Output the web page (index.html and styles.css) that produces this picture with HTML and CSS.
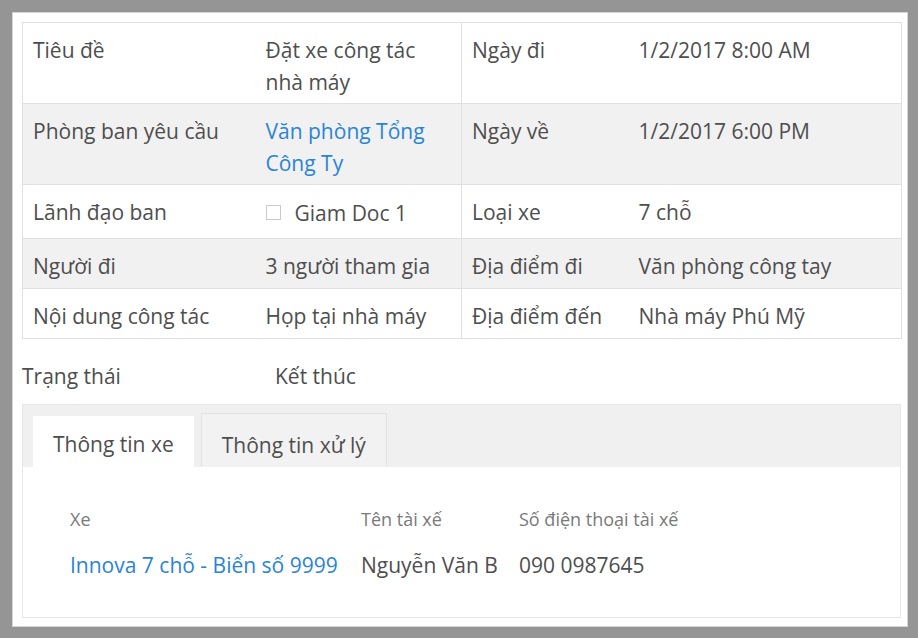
FILE: index.html
```html
<!DOCTYPE html>
<html lang="vi">
<head>
<meta charset="utf-8">
<title>Đặt xe công tác</title>
<link rel="stylesheet" href="styles.css">
</head>
<body>
<div class="panel">
  <table class="details">
    <colgroup>
      <col class="c1"><col class="c2"><col class="c3"><col class="c4">
    </colgroup>
    <tr>
      <td>Tiêu đề</td>
      <td>Đặt xe công tác nhà máy</td>
      <td class="sep">Ngày đi</td>
      <td>1/2/2017 8:00 AM</td>
    </tr>
    <tr class="alt">
      <td>Phòng ban yêu cầu</td>
      <td><a class="link" href="#">Văn phòng Tổng Công Ty</a></td>
      <td class="sep">Ngày về</td>
      <td>1/2/2017 6:00 PM</td>
    </tr>
    <tr class="tall">
      <td>Lãnh đạo ban</td>
      <td><span class="person"><span class="box"></span>Giam Doc 1</span></td>
      <td class="sep">Loại xe</td>
      <td>7 chỗ</td>
    </tr>
    <tr class="alt single">
      <td>Người đi</td>
      <td>3 người tham gia</td>
      <td class="sep">Địa điểm đi</td>
      <td>Văn phòng công tay</td>
    </tr>
    <tr class="single">
      <td>Nội dung công tác</td>
      <td>Họp tại nhà máy</td>
      <td class="sep">Địa điểm đến</td>
      <td>Nhà máy Phú Mỹ</td>
    </tr>
  </table>

  <div class="status">
    <span class="status-label">Trạng thái</span>
    <span class="status-value">Kết thúc</span>
  </div>

  <div class="tabs">
    <div class="tab-bar">
      <div class="tab active">Thông tin xe</div>
      <div class="tab">Thông tin xử lý</div>
    </div>
    <div class="tab-body">
      <div class="grid">
        <div class="th">Xe</div>
        <div class="th">Tên tài xế</div>
        <div class="th">Số điện thoại tài xế</div>
        <div class="td"><a class="link" href="#">Innova 7 chỗ - Biển số 9999</a></div>
        <div class="td">Nguyễn Văn B</div>
        <div class="td">090 0987645</div>
      </div>
    </div>
  </div>
</div>
</body>
</html>
```
FILE: styles.css
```css
html, body {
  margin: 0;
  padding: 0;
}
body {
  background: #959595;
  font-family: "Open Sans", "Noto Sans", sans-serif;
  font-size: 21px;
  color: #4e4e4e;
  padding: 12px 10px 11px 12px;
  height: 638px;
  box-sizing: border-box;
}
.panel {
  background: #fff;
  border: 1px solid #d4d4d4;
  height: 615px;
  box-sizing: border-box;
  padding: 9px 6px 0 9px;
}
.details {
  width: 879px;
  border-collapse: collapse;
  table-layout: fixed;
  border: 1px solid #e0e0e0;
}
.c1 { width: 233px; }
.c2 { width: 206px; }
.c3 { width: 167px; }
.c4 { width: 273px; }
.details td {
  padding: 11px 10px 5px 10px;
  line-height: 32px;
  vertical-align: top;
  border-top: 1px solid #e0e0e0;
}
.details td.sep {
  border-left: 1px solid #e0e0e0;
}
.details tr.alt td {
  background: #f1f1f1;
}
.details tr.tall td {
  padding-bottom: 9px;
}
.details tr.single td {
  padding-bottom: 6px;
}
.link {
  color: #2a84d6;
  text-decoration: none;
}
.person {
  display: inline-flex;
  align-items: center;
}
.box {
  width: 13px;
  height: 13px;
  border: 1px solid #cacaca;
  margin-right: 14px;
  background: #fff;
}
.status {
  display: flex;
  margin-top: 22px;
  line-height: 30px;
}
.status-label {
  width: 253px;
}
.tabs {
  margin-top: 13px;
  width: 879px;
  border: 1px solid #e6e6e6;
  box-sizing: border-box;
}
.tab-bar {
  background: #f0f0f0;
  height: 62px;
  display: flex;
  align-items: flex-end;
  gap: 6px;
  padding-left: 9px;
}
.tab {
  padding: 15px 20px 0;
  line-height: 32px;
  background: #f2f2f2;
  border: 1px solid #e2e2e2;
  border-bottom: none;
  box-sizing: border-box;
  height: 54px;
}
.tab.active {
  background: #fff;
  border-color: #f0f0f0;
  height: 52px;
  padding-top: 12px;
}
.tab-body {
  height: 150px;
  box-sizing: border-box;
  padding: 39px 0 0 47px;
}
.grid {
  display: grid;
  grid-template-columns: 291px 158px auto;
  row-gap: 16px;
}
.th {
  font-size: 18px;
  line-height: 27px;
  color: #7a7a7a;
}
.td {
  line-height: 32px;
  white-space: nowrap;
}
```
